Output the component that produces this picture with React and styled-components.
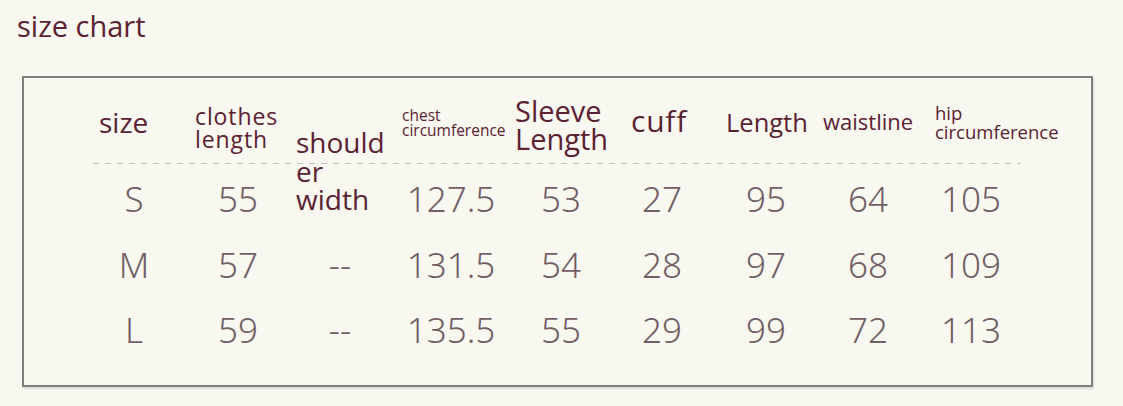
import React from 'react'
import styled, { createGlobalStyle } from 'styled-components'

const GlobalStyle = createGlobalStyle`
    html, body {
        margin: 0;
        padding: 0;
        background: #f8f7f0;
    }
`

const Page = styled.div`
    padding: 9px 0 0 17px;
    height: 406px;
    box-sizing: border-box;
    font-family: "Open Sans", "Noto Sans", sans-serif;
`

const Title = styled.h2`
    margin: 0;
    font-size: 29px;
    line-height: 34px;
    font-weight: 400;
    color: #5a2232;
`

const Chart = styled.div`
    box-sizing: border-box;
    margin: 33px 0 0 5px;
    width: 1071px;
    height: 311px;
    border: 2px solid #7e7e7b;
    box-shadow: 1px 2px 2px rgba(0, 0, 0, .12);
`

const HeaderRow = styled.div`
    display: grid;
    grid-template-columns: 96px 101px 106px 113px 116px 95px 97px 112px 1fr;
    grid-template-rows: 85px;
    align-items: start;
    padding-left: 75px;
    height: 85px;
`

const HeadCell = styled.div`
    padding-top: ${p => p.$top}px;
    font-size: ${p => p.$size}px;
    line-height: ${p => p.$line}px;
    letter-spacing: ${p => p.$track || 0}px;
    color: #5a2232;
    white-space: nowrap;
    position: relative;
    z-index: 1;
`

const Divider = styled.div`
    margin: 0 70px 0 69px;
    height: 1px;
    background: repeating-linear-gradient(to right, #c6c2bd 0 6px, transparent 6px 12px);
`

const Body = styled.div`
    padding-top: 2px;
`

const Row = styled.div`
    display: grid;
    grid-template-columns: 104px 104px 100px 122px 98px 104px 104px 100px 106px;
    padding-left: 58px;
    height: 65.5px;
    align-items: center;
`

const Value = styled.div`
    text-align: center;
    font-family: "Noto Sans", sans-serif;
    font-weight: 300;
    font-size: 35px;
    line-height: 65px;
    color: #725f65;
`

const headers = [
    { lines: ['size'], size: 28, line: 28, top: 30 },
    { lines: ['clothes', 'length'], size: 23, line: 22.5, top: 27, track: 0.9 },
    { lines: ['should', 'er', 'width'], size: 28, line: 28.5, top: 50 },
    { lines: ['chest', 'circumference'], size: 15.5, line: 15, top: 30 },
    { lines: ['Sleeve', 'Length'], size: 29, line: 28, top: 19 },
    { lines: ['cuff'], size: 30, line: 30, top: 28, track: 0.8 },
    { lines: ['Length'], size: 25.5, line: 28, top: 30 },
    { lines: ['waistline'], size: 22, line: 24, top: 31 },
    { lines: ['hip', 'circumference'], size: 18.5, line: 19, top: 25 },
]

const rows = [
    ['S', '55', '', '127.5', '53', '27', '95', '64', '105'],
    ['M', '57', '--', '131.5', '54', '28', '97', '68', '109'],
    ['L', '59', '--', '135.5', '55', '29', '99', '72', '113'],
]

const App = () => {
    return (
        <Page>
            <GlobalStyle />
            <Title>size chart</Title>
            <Chart>
                <HeaderRow>
                    {headers.map((h, i) => (
                        <HeadCell key={i} $size={h.size} $line={h.line} $top={h.top} $track={h.track}>
                            {h.lines.map((l, j) => (
                                <React.Fragment key={j}>
                                    {l}
                                    {j < h.lines.length - 1 && <br />}
                                </React.Fragment>
                            ))}
                        </HeadCell>
                    ))}
                </HeaderRow>
                <Divider />
                <Body>
                    {rows.map((r, i) => (
                        <Row key={i}>
                            {r.map((v, j) => <Value key={j}>{v}</Value>)}
                        </Row>
                    ))}
                </Body>
            </Chart>
        </Page>
    )
}

export default App
